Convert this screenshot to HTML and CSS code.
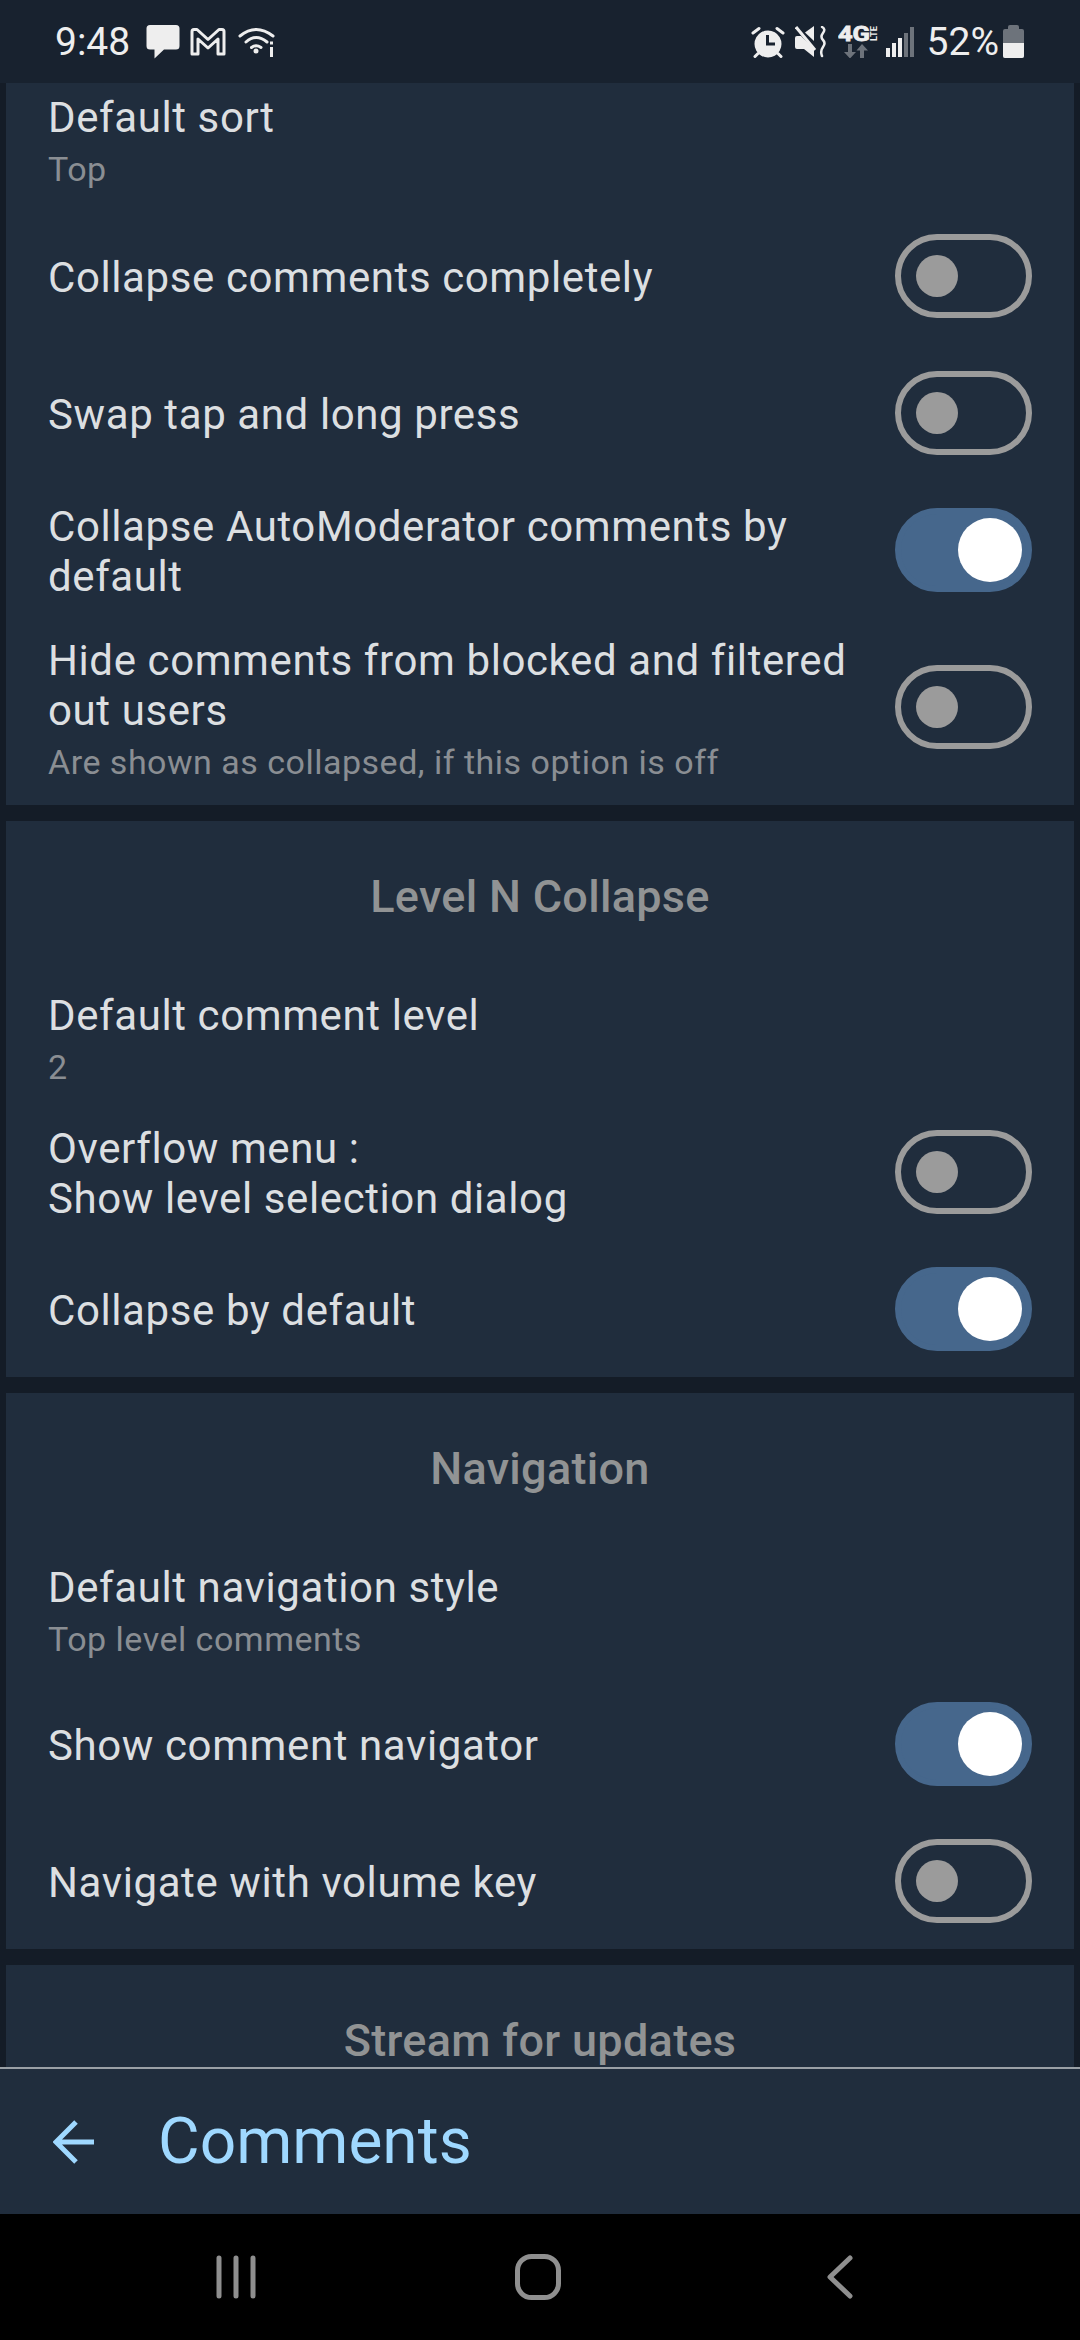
FILE: index.html
```html
<!DOCTYPE html>
<html lang="en">
<head>
    <meta charset="UTF-8">
    <meta name="viewport" content="width=device-width, initial-scale=1.0">
    <title>Comments</title>
    <link rel="stylesheet" href="styles.css">
</head>
<body>
    <div class="screen">
        <!-- Status bar -->
        <div class="status-bar">
            <div class="status-group">
                <span class="clock">9:48</span>
                <svg class="icon-message" width="34" height="34" viewBox="0 0 34 34"><path fill="#eeeeee" d="M4 0H30Q33.500 0 33.500 3.500V21Q33.500 24.500 30 24.500H18L8.500 33.500V24.500H4Q0.500 24.500 0.500 21V3.500Q0.500 0 4 0Z"/></svg>
                <svg class="icon-mail" width="36" height="28" viewBox="0 0 36 28"><path fill="none" stroke="#eeeeee" stroke-width="3" stroke-linejoin="round" d="M2 3.500Q2 1.500 4 1.500H7L18 11.500L29 1.500H32Q34 1.500 34 3.500V26H28V11L18 20L8 11V26H2Z"/></svg>
                <svg class="icon-wifi" width="38" height="32" viewBox="0 0 38 32"><g fill="none" stroke="#eeeeee" stroke-width="3" stroke-linecap="round"><path d="M2 10Q18 -3 35 10"/><path d="M8 16Q18 7 29 16"/><path d="M13.500 21.500Q18 18 23 21.500"/></g><circle cx="18" cy="25" r="2.500" fill="#eeeeee"/><rect x="32" y="21" width="3" height="10" fill="#eeeeee"/><rect x="32" y="15.500" width="3" height="3" fill="#eeeeee"/></svg>
            </div>
            <div class="status-group status-right">
                <svg class="icon-alarm" width="34" height="32" viewBox="0 0 34 32"><path fill="#eeeeee" d="M17 4.500A13.500 13.500 0 1 1 16.990 4.500Z"/><path fill="none" stroke="#18222f" stroke-width="3" d="M16.500 9V18H24"/><path fill="none" stroke="#eeeeee" stroke-width="3" stroke-linecap="round" d="M2 7L8 2.500M32 7L26 2.500M7 27.500L4 30.500M27 27.500L30 30.500"/></svg>
                <svg class="icon-mute" width="33" height="32" viewBox="0 0 33 32"><path fill="#eeeeee" d="M0 12Q0 10 2 10H6L19 23V31L9 23H2Q0 23 0 21Z"/><path fill="#eeeeee" d="M10 6.500L19 0V15Z"/><path fill="none" stroke="#eeeeee" stroke-width="3" d="M1 1L20 24"/><path fill="none" stroke="#eeeeee" stroke-width="2.500" stroke-linecap="round" d="M27 1Q31 3 28 7T28 14T28 21T27 30"/></svg>
                <!-- taller box than the glyphs need, so the text boxes stay inside the svg -->
                <svg class="icon-network" width="46" height="48" viewBox="0 -15 46 48"><text class="net-4g" x="0" y="16" textLength="32" lengthAdjust="spacingAndGlyphs">4G</text><text class="net-lte" transform="translate(39 16) rotate(-90)" textLength="15" lengthAdjust="spacingAndGlyphs">LTE</text><path fill="#6d737b" d="M10 19H14V27H18L12 33.500L6 27H10ZM22 33.500H26V25.500H30L24 19L18.500 25.500H22Z"/></svg>
                <svg class="icon-signal" width="28" height="30" viewBox="0 0 28 30"><rect x="0" y="21" width="4" height="9" fill="#eeeeee"/><rect x="6" y="16" width="4" height="14" fill="#eeeeee"/><rect x="12" y="11" width="4" height="19" fill="#eeeeee"/><rect x="18" y="6" width="4" height="24" fill="#6d737b"/><rect x="24" y="0" width="4" height="30" fill="#6d737b"/></svg>
                <span class="battery-text">52%</span>
                <div class="battery"><div class="battery-cap"></div><div class="battery-body"><div class="battery-fill"></div></div></div>
            </div>
        </div>

        <!-- Settings list -->
        <div class="content">
            <section class="card">
                <div class="row row-clipped">
                    <div class="row-text"><div class="label">Default sort</div><div class="sub">Top</div></div>
                </div>
                <div class="row">
                    <div class="row-text"><div class="label">Collapse comments completely</div></div>
                    <div class="switch"></div>
                </div>
                <div class="row">
                    <div class="row-text"><div class="label">Swap tap and long press</div></div>
                    <div class="switch"></div>
                </div>
                <div class="row">
                    <div class="row-text"><div class="label">Collapse AutoModerator comments by default</div></div>
                    <div class="switch on"></div>
                </div>
                <div class="row row-tall">
                    <div class="row-text"><div class="label">Hide comments from blocked and filtered out users</div><div class="sub">Are shown as collapsed, if this option is off</div></div>
                    <div class="switch"></div>
                </div>
            </section>

            <section class="card">
                <h2 class="card-title">Level N Collapse</h2>
                <div class="row row-value">
                    <div class="row-text"><div class="label">Default comment level</div><div class="sub">2</div></div>
                </div>
                <div class="row">
                    <div class="row-text"><div class="label">Overflow menu :<br>Show level selection dialog</div></div>
                    <div class="switch"></div>
                </div>
                <div class="row">
                    <div class="row-text"><div class="label">Collapse by default</div></div>
                    <div class="switch on"></div>
                </div>
            </section>

            <section class="card">
                <h2 class="card-title">Navigation</h2>
                <div class="row row-value">
                    <div class="row-text"><div class="label">Default navigation style</div><div class="sub">Top level comments</div></div>
                </div>
                <div class="row">
                    <div class="row-text"><div class="label">Show comment navigator</div></div>
                    <div class="switch on"></div>
                </div>
                <div class="row">
                    <div class="row-text"><div class="label">Navigate with volume key</div></div>
                    <div class="switch"></div>
                </div>
            </section>

            <section class="card">
                <h2 class="card-title">Stream for updates</h2>
            </section>
        </div>

        <!-- Bottom title bar -->
        <div class="title-bar">
            <svg class="back-arrow" width="42" height="44" viewBox="0 0 42 44"><path fill="none" stroke="#9fd8ff" stroke-width="5" d="M23 2L3 22L23 42M3 22H41"/></svg>
            <span class="page-title">Comments</span>
        </div>

        <!-- System navigation -->
        <div class="nav-bar">
            <div class="nav-slot">
                <svg width="40" height="44" viewBox="0 0 40 44"><g fill="none" stroke="#8f8f8f" stroke-width="5" stroke-linecap="round"><path d="M3 3V41M20 3V41M37 3V41"/></g></svg>
            </div>
            <div class="nav-slot">
                <svg width="46" height="46" viewBox="0 0 46 46"><rect x="2.500" y="2.500" width="41" height="41" rx="14" fill="none" stroke="#8f8f8f" stroke-width="5"/></svg>
            </div>
            <div class="nav-slot">
                <svg width="26" height="44" viewBox="0 0 26 44"><path fill="none" stroke="#8f8f8f" stroke-width="5" stroke-linecap="round" stroke-linejoin="round" d="M23 3L3 22L23 41"/></svg>
            </div>
        </div>
    </div>
</body>
</html>
```

FILE: styles.css
```css
/* General Reset */
* {
    margin: 0;
    padding: 0;
    box-sizing: border-box;
    font-family: Roboto, "Liberation Sans", sans-serif;
}

body {
    background: #141c27;
    overflow: hidden;
}

.screen {
    width: 1080px;
    height: 2340px;
    display: flex;
    flex-direction: column;
}

/* Status Bar */
.status-bar {
    height: 83px;
    flex: none;
    background: #18222f;
    color: #eeeeee;
    display: flex;
    justify-content: space-between;
    align-items: center;
    padding: 0 56px 0 55px;
}

.status-group {
    display: flex;
    align-items: center;
}

.clock {
    font-size: 39px;
    margin-right: 16px;
}

.icon-mail {
    margin: 0 12px 0 10px;
}

.icon-alarm,
.icon-mute {
    margin-right: 10px;
}

.icon-network {
    margin-top: -15px;
    margin-right: 2px;
}

.icon-signal {
    margin-right: 13px;
}

.net-4g {
    font-size: 21px;
    font-weight: 700;
    fill: #eeeeee;
    stroke: #eeeeee;
    stroke-width: 0.8px;
}

.net-lte {
    font-size: 8.5px;
    font-weight: 700;
    fill: #eeeeee;
}

.battery-text {
    font-size: 39px;
    margin-right: 4px;
}

.battery {
    width: 21px;
    display: flex;
    flex-direction: column;
    align-items: center;
}

.battery-cap {
    width: 11px;
    height: 4px;
    background: #6d737b;
    border-radius: 2px 2px 0 0;
}

.battery-body {
    width: 21px;
    height: 29px;
    background: #6d737b;
    border-radius: 2px;
    display: flex;
    align-items: flex-end;
    overflow: hidden;
}

.battery-fill {
    width: 100%;
    height: 15px;
    background: #eeeeee;
}

/* Settings List */
.content {
    flex: 1;
    min-height: 0;
    overflow: hidden;
    padding: 0 6px;
    display: flex;
    flex-direction: column;
    gap: 16px;
}

.card {
    background: #202d3d;
    flex: none;
}

.card-title {
    height: 142px;
    display: flex;
    align-items: center;
    justify-content: center;
    padding-top: 8px;
    font-size: 45px;
    font-weight: 500;
    letter-spacing: 0.3px;
    color: #919394;
}

.row {
    min-height: 137px;
    display: flex;
    align-items: center;
    justify-content: space-between;
    padding: 0 42px;
}

.row-text {
    flex: 1;
    min-width: 0;
    padding-top: 5px;
    padding-right: 30px;
}

.row-clipped {
    min-height: 124px;
    padding-bottom: 4px;
}

.row-clipped .row-text,
.row-tall .row-text {
    padding-top: 0;
}

.row-value {
    min-height: 140px;
}

.row-value .row-text {
    padding-top: 16px;
}

.row-tall {
    min-height: 187px;
}

.row-tall .switch {
    margin-bottom: 10px;
}

.label {
    font-size: 42px;
    line-height: 50px;
    color: #dcdfe1;
    letter-spacing: 0.6px;
}

.sub {
    font-size: 34px;
    line-height: 50px;
    margin-top: 1px;
    color: #8a8e93;
    letter-spacing: 0.5px;
}

/* Toggle Switch */
.switch {
    position: relative;
    flex: none;
    width: 137px;
    height: 84px;
    border: 6px solid #9b9b9b;
    border-radius: 42px;
}

.switch::after {
    content: "";
    position: absolute;
    left: 15px;
    top: 15px;
    width: 42px;
    height: 42px;
    border-radius: 50%;
    background: #9b9b9b;
}

.switch.on {
    background: #46678c;
    border-color: #46678c;
}

.switch.on::after {
    left: 57px;
    top: 4px;
    width: 64px;
    height: 64px;
    background: #ffffff;
}

/* Bottom Title Bar */
.title-bar {
    height: 147px;
    flex: none;
    background: #202d3d;
    border-top: 2px solid #9aa0a6;
    display: flex;
    align-items: center;
    padding-left: 53px;
}

.back-arrow {
    margin-right: 63px;
}

.page-title {
    font-size: 64px;
    color: #9fd8ff;
}

/* System Navigation */
.nav-bar {
    height: 126px;
    flex: none;
    background: #000000;
    display: flex;
    align-items: center;
    padding-left: 85px;
}

.nav-slot {
    width: 302px;
    display: flex;
    justify-content: center;
}
```
